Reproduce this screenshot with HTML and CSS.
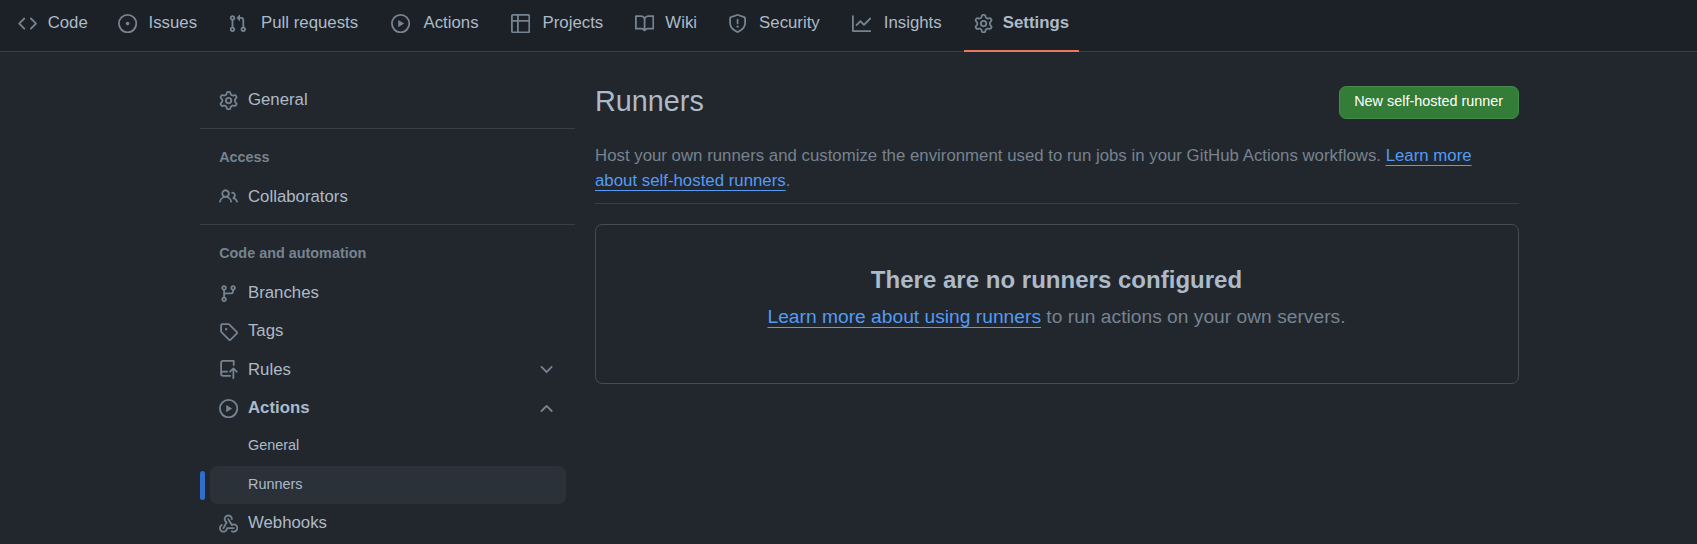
FILE: index.html
```html
<!DOCTYPE html>
<html lang="en">
<head>
<meta charset="utf-8">
<title>Runners</title>
<link rel="stylesheet" href="styles.css">
</head>
<body>
<svg class="sprite" aria-hidden="true">
  <symbol id="code" viewBox="0 0 16 16"><path d="m11.28 3.22 4.25 4.25a.75.75 0 0 1 0 1.06l-4.25 4.25a.749.749 0 0 1-1.275-.326.749.749 0 0 1 .215-.734L13.94 8l-3.72-3.72a.749.749 0 0 1 .326-1.275.749.749 0 0 1 .734.215Zm-6.56 0a.751.751 0 0 1 1.042.018.751.751 0 0 1 .018 1.042L2.06 8l3.72 3.72a.749.749 0 0 1-.326 1.275.749.749 0 0 1-.734-.215L.47 8.53a.75.75 0 0 1 0-1.06Z"/></symbol>
  <symbol id="issue" viewBox="0 0 16 16"><path d="M8 9.5a1.5 1.5 0 1 0 0-3 1.5 1.5 0 0 0 0 3Z"/><path d="M8 0a8 8 0 1 1 0 16A8 8 0 0 1 8 0ZM1.5 8a6.5 6.5 0 1 0 13 0 6.5 6.5 0 0 0-13 0Z"/></symbol>
  <symbol id="pull" viewBox="0 0 16 16"><path d="M1.5 3.25a2.25 2.25 0 1 1 3 2.122v5.256a2.251 2.251 0 1 1-1.5 0V5.372A2.25 2.25 0 0 1 1.5 3.25Zm5.677-.177L9.573.677A.25.25 0 0 1 10 .854V2.5h1A2.5 2.5 0 0 1 13.5 5v5.628a2.251 2.251 0 1 1-1.5 0V5a1 1 0 0 0-1-1h-1v1.646a.25.25 0 0 1-.427.177L7.177 3.427a.25.25 0 0 1 0-.354ZM3.75 2.5a.75.75 0 1 0 0 1.5.75.75 0 0 0 0-1.5Zm0 9.5a.75.75 0 1 0 0 1.5.75.75 0 0 0 0-1.5Zm8.25.75a.75.75 0 1 0 1.5 0 .75.75 0 0 0-1.5 0Z"/></symbol>
  <symbol id="play" viewBox="0 0 16 16"><path d="M8 0a8 8 0 1 1 0 16A8 8 0 0 1 8 0ZM1.5 8a6.5 6.5 0 1 0 13 0 6.5 6.5 0 0 0-13 0Zm4.879-2.773 4.264 2.559a.25.25 0 0 1 0 .428l-4.264 2.559A.25.25 0 0 1 6 10.559V5.442a.25.25 0 0 1 .379-.215Z"/></symbol>
  <symbol id="table" viewBox="0 0 16 16"><path d="M0 1.75C0 .784.784 0 1.75 0h12.5C15.216 0 16 .784 16 1.75v12.5A1.75 1.75 0 0 1 14.25 16H1.75A1.75 1.75 0 0 1 0 14.25ZM6.5 6.5v8h7.75a.25.25 0 0 0 .25-.25V6.5Zm8-1.5V1.75a.25.25 0 0 0-.25-.25H6.5V5Zm-13 1.5v7.75c0 .138.112.25.25.25H5v-8ZM5 5V1.5H1.75a.25.25 0 0 0-.25.25V5Z"/></symbol>
  <symbol id="book" viewBox="0 0 16 16"><path d="M0 1.75A.75.75 0 0 1 .75 1h4.253c1.227 0 2.317.59 3 1.501A3.743 3.743 0 0 1 11.006 1h4.245a.75.75 0 0 1 .75.75v10.5a.75.75 0 0 1-.75.75h-4.507a2.25 2.25 0 0 0-1.591.659l-.622.621a.75.75 0 0 1-1.06 0l-.622-.621A2.25 2.25 0 0 0 5.258 13H.75a.75.75 0 0 1-.75-.75Zm7.251 10.324.004-5.073-.002-2.253A2.25 2.25 0 0 0 5.003 2.5H1.5v9h3.757a3.75 3.75 0 0 1 1.994.574ZM8.755 4.75l-.004 7.322a3.752 3.752 0 0 1 1.992-.572H14.5v-9h-3.495a2.25 2.25 0 0 0-2.25 2.25Z"/></symbol>
  <symbol id="shield" viewBox="0 0 16 16"><path d="M7.467.133a1.748 1.748 0 0 1 1.066 0l5.25 1.68A1.75 1.75 0 0 1 15 3.48V7c0 1.566-.32 3.182-1.303 4.682-.983 1.498-2.585 2.813-5.032 3.855a1.697 1.697 0 0 1-1.33 0c-2.447-1.042-4.049-2.357-5.032-3.855C1.32 10.182 1 8.566 1 7V3.48a1.75 1.75 0 0 1 1.217-1.667Zm.61 1.429a.25.25 0 0 0-.153 0l-5.25 1.68a.25.25 0 0 0-.174.238V7c0 1.358.275 2.666 1.057 3.86.784 1.194 2.121 2.34 4.366 3.297a.196.196 0 0 0 .154 0c2.245-.956 3.582-2.104 4.366-3.298C13.225 9.666 13.5 8.36 13.5 7V3.48a.251.251 0 0 0-.174-.237l-5.25-1.68ZM8.75 4.75v3a.75.75 0 0 1-1.5 0v-3a.75.75 0 0 1 1.5 0ZM9 10.5a1 1 0 1 1-2 0 1 1 0 0 1 2 0Z"/></symbol>
  <symbol id="graph" viewBox="0 0 16 16"><path d="M1.5 1.75V13.5h13.75a.75.75 0 0 1 0 1.5H.75a.75.75 0 0 1-.75-.75V1.75a.75.75 0 0 1 1.5 0Zm14.28 2.53-5.25 5.25a.75.75 0 0 1-1.06 0L7 7.06 4.28 9.78a.751.751 0 0 1-1.042-.018.751.751 0 0 1-.018-1.042l3.25-3.25a.75.75 0 0 1 1.06 0L10 7.94l4.72-4.72a.751.751 0 0 1 1.042.018.751.751 0 0 1 .018 1.042Z"/></symbol>
  <symbol id="gear" viewBox="0 0 16 16"><path d="M8 0a8.2 8.2 0 0 1 .701.031C9.444.095 9.99.645 10.16 1.29l.288 1.107c.018.066.079.158.212.224.231.114.454.243.668.386.123.082.233.09.299.071l1.103-.303c.644-.176 1.392.021 1.82.63.27.385.506.792.704 1.218.315.675.111 1.422-.364 1.891l-.814.806c-.049.048-.098.147-.088.294.016.257.016.515 0 .772-.01.147.038.246.088.294l.814.806c.475.469.679 1.216.364 1.891a7.977 7.977 0 0 1-.704 1.217c-.428.61-1.176.807-1.82.63l-1.102-.302c-.067-.019-.177-.011-.3.071a5.909 5.909 0 0 1-.668.386c-.133.066-.194.158-.211.224l-.29 1.106c-.168.646-.715 1.196-1.458 1.26a8.006 8.006 0 0 1-1.402 0c-.743-.064-1.289-.614-1.458-1.26l-.289-1.106c-.018-.066-.079-.158-.212-.224a5.738 5.738 0 0 1-.668-.386c-.123-.082-.233-.09-.299-.071l-1.103.303c-.644.176-1.392-.021-1.82-.63a8.12 8.12 0 0 1-.704-1.218c-.315-.675-.111-1.422.363-1.891l.815-.806c.05-.048.098-.147.088-.294a6.214 6.214 0 0 1 0-.772c.01-.147-.038-.246-.088-.294l-.815-.806C.635 6.045.431 5.298.746 4.623a7.92 7.92 0 0 1 .704-1.217c.428-.61 1.176-.807 1.82-.63l1.102.302c.067.019.177.011.3-.071.214-.143.437-.272.668-.386.133-.066.194-.158.211-.224l.29-1.106C6.009.645 6.556.095 7.299.03 7.53.01 7.764 0 8 0Zm-.571 1.525c-.036.003-.108.036-.137.146l-.289 1.105c-.147.561-.549.967-.998 1.189-.173.086-.34.183-.5.29-.417.278-.97.423-1.529.27l-1.103-.303c-.109-.03-.175.016-.195.045-.22.312-.412.644-.573.99-.014.031-.021.11.059.19l.815.806c.411.406.562.957.53 1.456a4.709 4.709 0 0 0 0 .582c.032.499-.119 1.05-.53 1.456l-.815.806c-.081.08-.073.159-.059.19.162.346.353.677.573.989.02.03.085.076.195.046l1.102-.303c.56-.153 1.113-.008 1.53.27.161.107.328.204.501.29.447.222.85.629.997 1.189l.289 1.105c.029.109.101.143.137.146a6.6 6.6 0 0 0 1.142 0c.036-.003.108-.036.137-.146l.289-1.105c.147-.561.549-.967.998-1.189.173-.086.34-.183.5-.29.417-.278.97-.423 1.529-.27l1.103.303c.109.029.175-.016.195-.045.22-.313.411-.644.573-.99.014-.031.021-.11-.059-.19l-.815-.806c-.411-.406-.562-.957-.53-1.456a4.709 4.709 0 0 0 0-.582c-.032-.499.119-1.05.53-1.456l.815-.806c.081-.08.073-.159.059-.19a6.464 6.464 0 0 0-.573-.989c-.02-.03-.085-.076-.195-.046l-1.102.303c-.56.153-1.113.008-1.53-.27a4.44 4.44 0 0 0-.501-.29c-.447-.222-.85-.629-.997-1.189l-.289-1.105c-.029-.11-.101-.143-.137-.146a6.6 6.6 0 0 0-1.142 0ZM11 8a3 3 0 1 1-6 0 3 3 0 0 1 6 0ZM9.5 8a1.5 1.5 0 1 0-3.001.001A1.5 1.5 0 0 0 9.5 8Z"/></symbol>
  <symbol id="people" viewBox="0 0 16 16"><path d="M2 5.5a3.5 3.5 0 1 1 5.898 2.549 5.508 5.508 0 0 1 3.034 4.084.75.75 0 1 1-1.482.235 4 4 0 0 0-7.9 0 .75.75 0 0 1-1.482-.236A5.507 5.507 0 0 1 3.102 8.05 3.493 3.493 0 0 1 2 5.5ZM11 4a3.001 3.001 0 0 1 2.22 5.018 5.01 5.01 0 0 1 2.56 3.012.749.749 0 0 1-.885.954.752.752 0 0 1-.549-.514 3.507 3.507 0 0 0-2.522-2.372.75.75 0 0 1-.574-.73v-.352a.75.75 0 0 1 .416-.672A1.5 1.5 0 0 0 11 5.5.75.75 0 0 1 11 4Zm-5.5-.5a2 2 0 1 0-.001 3.999A2 2 0 0 0 5.5 3.5Z"/></symbol>
  <symbol id="branch" viewBox="0 0 16 16"><path d="M9.5 3.25a2.25 2.25 0 1 1 3 2.122V6A2.5 2.5 0 0 1 10 8.5H6a1 1 0 0 0-1 1v1.128a2.251 2.251 0 1 1-1.5 0V5.372a2.25 2.25 0 1 1 1.5 0v1.836A2.493 2.493 0 0 1 6 7h4a1 1 0 0 0 1-1v-.628A2.25 2.25 0 0 1 9.5 3.25Zm-6 0a.75.75 0 1 0 1.5 0 .75.75 0 0 0-1.5 0Zm8.25-.75a.75.75 0 1 0 0 1.5.75.75 0 0 0 0-1.5ZM4.25 12a.75.75 0 1 0 0 1.5.75.75 0 0 0 0-1.5Z"/></symbol>
  <symbol id="tag" viewBox="0 0 16 16"><path d="M1 7.775V2.75C1 1.784 1.784 1 2.75 1h5.025c.464 0 .91.184 1.238.513l6.25 6.25a1.75 1.75 0 0 1 0 2.474l-5.026 5.026a1.75 1.75 0 0 1-2.474 0l-6.25-6.25A1.752 1.752 0 0 1 1 7.775Zm1.5 0c0 .066.026.13.073.177l6.25 6.25a.25.25 0 0 0 .354 0l5.025-5.025a.25.25 0 0 0 0-.354l-6.25-6.25a.25.25 0 0 0-.177-.073H2.75a.25.25 0 0 0-.25.25ZM6 5a1 1 0 1 1 0 2 1 1 0 0 1 0-2Z"/></symbol>
  <symbol id="repo-push" viewBox="0 0 16 16"><path d="M1 2.5A2.5 2.5 0 0 1 3.5 0h8.75a.75.75 0 0 1 .75.75v3.5a.75.75 0 0 1-1.5 0V1.5h-8a1 1 0 0 0-1 1v6.708A2.493 2.493 0 0 1 3.5 9h3.25a.75.75 0 0 1 0 1.5H3.5a1 1 0 0 0 0 2h5.75a.75.75 0 0 1 0 1.5H3.5A2.5 2.5 0 0 1 1 11.5Zm13.23 7.79-1.48-1.482v6.442a.75.75 0 0 1-1.5 0V8.808L9.77 10.29a.751.751 0 0 1-1.042-.018.751.751 0 0 1-.018-1.042l2.76-2.76a.75.75 0 0 1 1.06 0l2.76 2.76a.749.749 0 0 1-.326 1.275.749.749 0 0 1-.734-.215Z"/></symbol>
  <symbol id="webhook" viewBox="0 0 16 16"><path d="M5.5 4.25a2.25 2.25 0 0 1 4.5 0 .75.75 0 0 0 1.5 0 3.75 3.75 0 1 0-6.14 2.889l-2.272 4.258a.75.75 0 0 0 1.324.706L7 7.25a.75.75 0 0 0-.309-1.015A2.25 2.25 0 0 1 5.5 4.25Z"/><path d="M7.364 3.607a.75.75 0 0 1 1.03.257l2.608 4.349a3.75 3.75 0 1 1-.628 6.785.75.75 0 0 1 .752-1.299 2.25 2.25 0 1 0-.033-3.88.75.75 0 0 1-1.03-.256L7.107 4.636a.75.75 0 0 1 .257-1.03Z"/><path d="M2.9 8.776A.75.75 0 0 1 2.625 9.8 2.25 2.25 0 1 0 6 11.75a.75.75 0 0 1 .75-.751h5.5a.75.75 0 0 1 0 1.5H7.425a3.751 3.751 0 1 1-5.55-3.998.75.75 0 0 1 1.024.274Z"/></symbol>
  <symbol id="down" viewBox="0 0 16 16"><path d="M12.78 5.22a.749.749 0 0 1 0 1.06l-4.25 4.25a.749.749 0 0 1-1.06 0L3.22 6.28a.749.749 0 1 1 1.06-1.06L8 8.939l3.72-3.719a.749.749 0 0 1 1.06 0Z"/></symbol>
  <symbol id="up" viewBox="0 0 16 16"><path d="M3.22 10.53a.749.749 0 0 1 0-1.06l4.25-4.25a.749.749 0 0 1 1.06 0l4.25 4.25a.749.749 0 1 1-1.06 1.06L8 6.811 4.28 10.53a.749.749 0 0 1-1.06 0Z"/></symbol>
</svg>

<nav class="tabs">
  <a class="tab"><svg class="icon"><use href="#code"/></svg><span class="tab-label" data-content="Code">Code</span></a>
  <a class="tab"><svg class="icon"><use href="#issue"/></svg><span class="tab-label" data-content="Issues">Issues</span></a>
  <a class="tab"><svg class="icon"><use href="#pull"/></svg><span class="tab-label" data-content="Pull requests">Pull requests</span></a>
  <a class="tab"><svg class="icon"><use href="#play"/></svg><span class="tab-label" data-content="Actions">Actions</span></a>
  <a class="tab"><svg class="icon"><use href="#table"/></svg><span class="tab-label" data-content="Projects">Projects</span></a>
  <a class="tab"><svg class="icon"><use href="#book"/></svg><span class="tab-label" data-content="Wiki">Wiki</span></a>
  <a class="tab"><svg class="icon"><use href="#shield"/></svg><span class="tab-label" data-content="Security">Security</span></a>
  <a class="tab"><svg class="icon"><use href="#graph"/></svg><span class="tab-label" data-content="Insights">Insights</span></a>
  <a class="tab selected"><svg class="icon"><use href="#gear"/></svg><span class="tab-label" data-content="Settings">Settings</span></a>
</nav>

<div class="layout">
  <aside class="sidebar">
    <ul class="group">
      <li class="item"><svg class="icon"><use href="#gear"/></svg><span class="label">General</span></li>
    </ul>
    <h3 class="heading">Access</h3>
    <ul class="group">
      <li class="item"><svg class="icon"><use href="#people"/></svg><span class="label">Collaborators</span></li>
    </ul>
    <h3 class="heading">Code and automation</h3>
    <ul class="group">
      <li class="item"><svg class="icon"><use href="#branch"/></svg><span class="label">Branches</span></li>
      <li class="item"><svg class="icon"><use href="#tag"/></svg><span class="label">Tags</span></li>
      <li class="item"><svg class="icon"><use href="#repo-push"/></svg><span class="label">Rules</span><svg class="icon"><use href="#down"/></svg></li>
      <li class="item open"><svg class="icon"><use href="#play"/></svg><span class="label">Actions</span><svg class="icon"><use href="#up"/></svg></li>
      <li class="item sub"><span class="label">General</span></li>
      <li class="item sub current"><span class="label">Runners</span></li>
      <li class="item"><svg class="icon"><use href="#webhook"/></svg><span class="label">Webhooks</span></li>
    </ul>
  </aside>

  <main class="content">
    <header class="title-row">
      <h1 class="title">Runners</h1>
      <button class="button" type="button">New self-hosted runner</button>
    </header>
    <p class="intro">Host your own runners and customize the environment used to run jobs in your GitHub Actions workflows. <a class="link">Learn more about self-hosted runners</a>.</p>
    <section class="blank">
      <h2 class="blank-title">There are no runners configured</h2>
      <p class="blank-text"><a class="link">Learn more about using runners</a> to run actions on your own servers.</p>
    </section>
  </main>
</div>
</body>
</html>
```

FILE: styles.css
```css
* {
  box-sizing: border-box;
}

html,
body {
  height: 100%;
}

body {
  margin: 0;
  overflow: hidden;
  background: #22272e;
  color: #adbac7;
  font: 16.8px/25px "Liberation Sans", Arial, sans-serif;
}

h1,
h2,
h3,
p,
ul {
  margin: 0;
  padding: 0;
  list-style: none;
}

.sprite {
  display: none;
}

.icon {
  flex: none;
  width: 19.2px;
  height: 19.2px;
  fill: #768390;
}

/* Repository tabs */
.tabs {
  display: flex;
  gap: 10px;
  height: 52px;
  padding: 0 8.4px;
  background: #1c2128;
  border-bottom: 1px solid #373e47;
}

.tab {
  position: relative;
  display: flex;
  align-items: center;
  gap: 9.6px;
  height: 52px;
  padding: 0 9.6px 5px;
}

.tab-label {
  margin-top: -2px;
  text-align: center;
}

/* Reserves the bold width so that selecting a tab does not shift the row */
.tab-label::before {
  content: attr(data-content);
  display: block;
  height: 0;
  overflow: hidden;
  visibility: hidden;
  font-weight: 700;
}

.tab.selected .tab-label {
  font-weight: 700;
}

.tab.selected::after {
  content: "";
  position: absolute;
  left: 0;
  right: 0;
  bottom: 0;
  height: 2px;
  background: #ec775c;
}

/* Page columns */
.layout {
  display: flex;
  gap: 20px;
  width: 1319px;
  margin-left: 200px;
}

.sidebar {
  flex: none;
  width: 375px;
  padding-top: 29.6px;
}

.group {
  padding-bottom: 8px;
}

.heading {
  height: 49.8px;
  padding-top: 16px;
  padding-left: 19.2px;
  border-top: 1px solid #373e47;
  color: #768390;
  font-size: 14.4px;
  line-height: 24px;
}

.item {
  position: relative;
  display: flex;
  align-items: center;
  gap: 9.6px;
  height: 38.4px;
  margin: 0 9px 0 9.6px;
  padding: 0 9.6px;
  border-radius: 7.2px;
}

.label {
  flex: 1;
  margin-top: -1.8px;
}

.open .label {
  font-weight: 700;
}

.sub {
  padding-left: 38.4px;
  font-size: 14.4px;
}

.current {
  background: #2b3138;
}

.current::before {
  content: "";
  position: absolute;
  left: -9.6px;
  top: 4.8px;
  width: 4.8px;
  height: 28.8px;
  border-radius: 3px;
  background: #316dca;
}

/* Runners panel */
.content {
  flex: 1;
  padding-top: 34px;
}

.title-row {
  display: flex;
  justify-content: space-between;
  align-items: flex-start;
}

.title {
  font-size: 28.8px;
  font-weight: 400;
  line-height: 30px;
}

.button {
  height: 33px;
  padding: 0 15px 3px 14px;
  border: 1px solid #468b4b;
  border-radius: 7.2px;
  background: #347d39;
  color: #fff;
  font: 14.4px/24px "Liberation Sans", Arial, sans-serif;
}

.intro {
  margin-top: 24px;
  padding: 0 30px 10px 0;
  border-bottom: 1px solid #373e47;
  color: #768390;
  letter-spacing: 0.015px;
}

.link {
  color: #539bf5;
  text-decoration: underline 1px;
  text-underline-offset: 3.84px;
}

.blank {
  height: 160px;
  margin-top: 20px;
  padding-top: 37px;
  border: 1px solid #444c56;
  border-radius: 7.2px;
  text-align: center;
}

.blank-title {
  padding-right: 1px;
  font-size: 24px;
  line-height: 36px;
  letter-spacing: 0.02px;
}

.blank-text {
  margin-top: 4.8px;
  padding-right: 1px;
  color: #768390;
  font-size: 19.2px;
  line-height: 28.8px;
  letter-spacing: 0.015px;
}
```
